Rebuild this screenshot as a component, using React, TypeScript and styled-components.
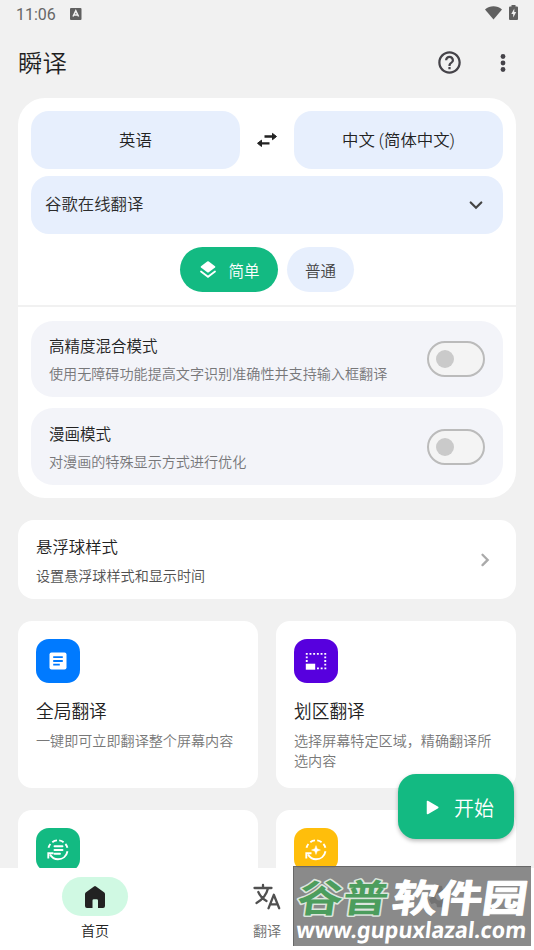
import React from 'react';
import styled, { createGlobalStyle } from 'styled-components';

const GlobalStyle = createGlobalStyle`
  * { box-sizing: border-box; }
  html, body { margin: 0; padding: 0; overflow: hidden; background: #f1f1f1; }
  body { font-family: Roboto, "Noto Sans CJK SC DemiLight", "Noto Sans CJK SC", sans-serif; font-weight: 350; color: #222; }
`;

const Screen = styled.div`
  position: relative;
  width: 534px;
  height: 950px;
  overflow: hidden;
  display: flex;
  flex-direction: column;
  background: #f1f1f1;
`;

const StatusBar = styled.div`
  height: 28px;
  flex: none;
  display: flex;
  align-items: center;
  padding: 0 15px 0 16px;
  color: #666;
  font-size: 16px;
  font-weight: 400;
  svg { display: block; }
`;

const StatusIcons = styled.div`
  margin-left: auto;
  display: flex;
  align-items: center;
  gap: 7px;
  padding: 0 1px 3px 0;
`;

const InputBadge = styled.div`
  margin-left: 14px;
`;

const Header = styled.header`
  height: 70px;
  flex: none;
  display: flex;
  align-items: center;
  padding: 0 18px 1px 18px;
`;

const Title = styled.h1`
  margin: 2px auto 0 0;
  font-size: 24.4px;
  font-weight: 350;
  line-height: 36px;
  color: #1f1f1f;
`;

const HeaderActions = styled.div`
  display: flex;
  gap: 27px;
  align-items: center;
  svg { display: block; }
`;

const Content = styled.main`
  flex: 1;
  min-height: 0;
  overflow: hidden;
  padding: 0 18px;
`;

const Panel = styled.section`
  background: #fff;
  border-radius: 27px;
  height: 400px;
`;

const Languages = styled.div`
  display: grid;
  grid-template-columns: 209px 1fr 209px;
  align-items: center;
  justify-items: center;
  padding: 13px 13px 0;
`;

const LanguageButton = styled.button`
  width: 100%;
  height: 58px;
  border: 0;
  padding: 2px 0 0;
  border-radius: 18px;
  background: #e7effd;
  font: inherit;
  font-size: 16.4px;
  line-height: 24px;
  color: #222;
`;

const EngineSelect = styled.div`
  margin: 7px 13px 0;
  height: 58px;
  border-radius: 18px;
  background: #e7effd;
  display: flex;
  align-items: center;
  justify-content: space-between;
  padding: 0 15px 0 14px;
  font-size: 16.4px;
  line-height: 26px;
  color: #2b2b2b;
  svg { margin-top: -1px; }
`;

const Chips = styled.div`
  display: flex;
  justify-content: center;
  gap: 9px;
  padding: 13px 0 13px;
`;

const Chip = styled.button<{ $active?: boolean; $width: number }>`
  width: ${p => p.$width}px;
  height: 45px;
  border: 0;
  padding: 0;
  border-radius: 23px;
  display: flex;
  align-items: center;
  justify-content: center;
  gap: 10px;
  font: inherit;
  font-size: 15.5px;
  background: ${p => (p.$active ? '#13ba82' : '#e7effd')};
  color: ${p => (p.$active ? '#fff' : '#444')};
`;

const Divider = styled.div`
  height: 2px;
  background: #f1f1f1;
`;

const Options = styled.div`
  display: flex;
  flex-direction: column;
  gap: 11px;
  padding: 14px 13px;
`;

const OptionRow = styled.div`
  height: 76px;
  &:last-child { height: 77px; }
  border-radius: 22px;
  background: #f3f4f9;
  display: flex;
  align-items: center;
  justify-content: space-between;
  padding: 0 18px;
`;

const OptionTitle = styled.div`
  font-size: 15.5px;
  line-height: 24px;
  margin: 2px 0 4px;
  color: #222;
`;

const OptionText = styled.div`
  font-size: 14.1px;
  line-height: 22px;
  color: #777779;
`;

const Toggle = styled.div`
  width: 58px;
  height: 36px;
  border: 2px solid #bbb;
  border-radius: 18px;
  background: #f4f4f4;
  padding: 7px;
  &::before {
    content: "";
    display: block;
    width: 18px;
    height: 18px;
    border-radius: 50%;
    background: #cacaca;
  }
`;

const StyleCard = styled.section`
  margin-top: 22px;
  height: 79px;
  border-radius: 16px;
  background: #fff;
  padding: 0 18px;
  display: flex;
  align-items: center;
  justify-content: space-between;
`;

const StyleTitle = styled.div`
  font-size: 16.4px;
  line-height: 24px;
  color: #222;
  margin: 4px 0 5px;
`;

const StyleText = styled.div`
  font-size: 14.1px;
  line-height: 22px;
  color: #505050;
`;

const Tiles = styled.div`
  margin-top: 22px;
  display: grid;
  grid-template-columns: 240px 240px;
  column-gap: 18px;
  row-gap: 22px;
`;

const Tile = styled.section`
  height: 167px;
  border-radius: 14px;
  background: #fff;
  padding: 18px 18px 0;
`;

const TileIcon = styled.div<{ $color: string }>`
  width: 44px;
  height: 44px;
  border-radius: 13px;
  background: ${p => p.$color};
  display: flex;
  align-items: center;
  justify-content: center;
`;

const TileTitle = styled.div`
  margin-top: 15px;
  font-size: 17.7px;
  line-height: 28px;
  color: #222;
`;

const TileText = styled.div`
  margin: 6px -6px 0 0;
  width: 200px;
  font-size: 14.1px;
  line-height: 19.5px;
  color: #787878;
`;

const StartButton = styled.button`
  position: absolute;
  right: 20px;
  top: 774px;
  width: 116px;
  height: 65px;
  border: 0;
  border-radius: 18px;
  background: #13ba82;
  color: #fff;
  font: inherit;
  font-size: 20px;
  display: flex;
  align-items: center;
  padding: 1px 0 0 28px;
  gap: 15px;
  box-shadow: 0 2px 4px rgba(0, 0, 0, 0.28);
`;

const Nav = styled.nav`
  height: 82px;
  flex: none;
  background: #fff;
  padding: 9px 9px 0;
  display: grid;
  grid-template-columns: repeat(3, 1fr);
`;

const NavItem = styled.div<{ $active?: boolean }>`
  display: flex;
  flex-direction: column;
  align-items: center;
  font-size: 14.1px;
  line-height: 20px;
  color: ${p => (p.$active ? '#222' : '#707070')};
`;

const NavPill = styled.div<{ $active?: boolean }>`
  width: 66px;
  height: 39px;
  margin-bottom: 5px;
  border-radius: 20px;
  display: flex;
  align-items: center;
  justify-content: center;
  background: ${p => (p.$active ? '#d0f9e3' : 'transparent')};
`;

const Watermark = styled.div`
  position: absolute;
  left: 293px;
  top: 866px;
  width: 238px;
  height: 80px;
  background: rgba(125, 125, 125, 0.9);
  border-top: 1px solid #686868;
  border-left: 1px solid #686868;
  svg { display: block; overflow: visible; }
`;

const WifiIcon = () => (
  <svg width="17" height="14" viewBox="0 0 17 14">
    <path d="M0 3.4C5 -.9 12 -.9 17 3.4L8.5 13.6z" fill="#606060" />
  </svg>
);

const BatteryIcon = () => (
  <svg width="9" height="15" viewBox="0 0 9 15">
    <path d="M2.5 0h4v1.5H8q1 0 1 1V14q0 1-1 1H1q-1 0-1-1V2.500q0-1 1-1h1.500z" fill="#606060" />
    <path d="M5.300 3.500 2.300 8.900h1.900v3.700l3-5.500H5.300z" fill="#f1f1f1" />
  </svg>
);

const BadgeIcon = () => (
  <svg width="12" height="12" viewBox="0 0 12 12">
    <rect width="11.500" height="12" rx="1" fill="#606060" />
    <path d="M3 8.500 5.800 2.800 8.600 8.500M4 6.900h3.600" fill="none" stroke="#f1f1f1" strokeWidth="1.500" />
  </svg>
);

const HelpIcon = () => (
  <svg width="27" height="27" viewBox="0 0 24 24" fill="#454349">
    <path d="M11 18h2v-2h-2v2zm1-16C6.480 2 2 6.480 2 12s4.480 10 10 10 10-4.480 10-10S17.520 2 12 2zm0 18c-4.410 0-8-3.590-8-8s3.590-8 8-8 8 3.590 8 8-3.590 8-8 8zm0-14c-2.210 0-4 1.790-4 4h2c0-1.100.9-2 2-2s2 .9 2 2c0 2-3 1.750-3 5h2c0-2.250 3-2.500 3-5 0-2.210-1.790-4-4-4z" />
  </svg>
);

const MoreIcon = () => (
  <svg width="26" height="26" viewBox="0 0 26 26" fill="#454349">
    <circle cx="13" cy="6.500" r="2.400" /><circle cx="13" cy="13" r="2.400" /><circle cx="13" cy="19.500" r="2.400" />
  </svg>
);

const SwapIcon = () => (
  <svg width="22" height="18" viewBox="0 0 22 18" fill="none" stroke="#222" strokeWidth="2.300">
    <path d="M8.500 5.500H17M13.500 12.300H5" />
    <path d="M16.500 2.400 20.500 5.500 16.500 8.700zM5.500 9.200 1.500 12.300 5.500 15.500z" fill="#222" stroke="#222" strokeWidth="1" strokeLinejoin="round" />
  </svg>
);

const ChevronDown = () => (
  <svg width="24" height="24" viewBox="0 0 24 24" fill="none" stroke="#444" strokeWidth="2.200" strokeLinecap="round">
    <path d="m6.700 9.500 5.300 5.300 5.300-5.300" />
  </svg>
);

const ChevronRight = () => (
  <svg width="26" height="26" viewBox="0 0 26 26" fill="none" stroke="#aaa" strokeWidth="2.300" strokeLinecap="round">
    <path d="m10.500 7.700 5.200 5.200-5.200 5.200" />
  </svg>
);

const LayersIcon = () => (
  <svg width="20" height="20" viewBox="0 0 20 20" fill="#fff">
    <path d="M9.200 1.500q.8-.5 1.600 0l6.200 4.700q.9.700 0 1.400l-6.200 4.700q-.8.500-1.600 0L3 7.600q-.9-.7 0-1.400z" />
    <path d="m3 11.500 7 5.300 7-5.300" fill="none" stroke="#fff" strokeWidth="1.800" strokeLinecap="round" />
  </svg>
);

const ArticleIcon = () => (
  <svg width="18" height="18" viewBox="0 0 18 18">
    <rect x=".5" y=".5" width="17" height="17" rx="2" fill="#fff" />
    <path d="M4.200 5.200h9.600M4.200 9h9.600M4.200 12.700h6.600" stroke="#007aff" strokeWidth="1.800" />
  </svg>
);

const RegionIcon = () => (
  <svg width="22" height="18" viewBox="0 0 22 18">
    <path d="M.8 1.800h20.500M.8 5.300h2M.8 9h2M19.300 5.300h2M19.300 9h2M19.300 12.700h2M12 16.400h9.300" fill="none" stroke="#fff" strokeWidth="1.800" strokeDasharray="1.900 1.800" />
    <path d="M.8 11.700h9.400v6H.8z" fill="#fff" />
  </svg>
);

const CycleIcon = ({ children }: { children: React.ReactNode }) => (
  <svg width="24" height="24" viewBox="0 0 24 24" fill="none" stroke="#fff" strokeWidth="1.900">
    <path d="M2.500 9.800Q3 7.700 4.400 6M6.300 4.200Q8.300 2.600 11 2.400M13.200 2.400Q15.700 2.700 17.600 4.200M19.400 6Q21 7.700 21.400 9.800M21.500 13.200C20.500 18 16.800 21.300 12 21.300Q6.800 21.200 4 16.500" />
    <path d="M2.300 20.400v-5.200h5.200" />
    {children}
  </svg>
);

const PlayIcon = () => (
  <svg width="13" height="15" viewBox="0 0 13 15">
    <path d="M1.500 1.500v12L11.800 7.500z" fill="#fff" stroke="#fff" strokeWidth="1.500" strokeLinejoin="round" />
  </svg>
);

const HomeIcon = () => (
  <svg width="22" height="24" viewBox="0 0 22 24">
    <path d="M10 1.500q1-.8 2 0l8 5.800q1 .7 1 2V21q0 2-2 2h-5v-7.500q0-1.300-1.300-1.300H9.800Q8.500 14.200 8.500 15.500V23H3q-2 0-2-2V9.300q0-1.300 1-2z" fill="#222" />
  </svg>
);

const TranslateIcon = () => (
  <svg width="30" height="28" viewBox="0 0 30 28" fill="none" stroke="#505050" strokeWidth="2.300" strokeLinecap="round" strokeLinejoin="round">
    <path d="M2.500 5h17M11 2v3M16 5.300C14.500 12 9 17.500 4.500 20M6.300 9C8 13 11 16 14.500 18" />
    <path d="m16.500 25.300 5.300-13.500L27.200 25.300M18.300 21.300h7.200" />
  </svg>
);

const GearIcon = () => (
  <svg width="27" height="27" viewBox="0 0 24 24" fill="#111">
    <path d="M19.140 12.940c.04-.3.060-.61.060-.94 0-.32-.02-.64-.07-.94l2.030-1.580a.49.49 0 0 0 .12-.61l-1.920-3.320a.488.488 0 0 0-.59-.22l-2.390.96c-.5-.38-1.030-.7-1.620-.94l-.36-2.540a.484.484 0 0 0-.48-.41h-3.840c-.24 0-.43.17-.47.41l-.36 2.540c-.59.24-1.130.57-1.620.94l-2.390-.96c-.22-.08-.47 0-.59.22L2.740 8.870c-.12.21-.08.47.12.61l2.030 1.580c-.05.3-.09.63-.09.94s.02.64.07.94l-2.030 1.580a.49.49 0 0 0-.12.61l1.920 3.320c.12.22.37.29.59.22l2.390-.96c.5.38 1.030.7 1.620.94l.36 2.540c.05.24.24.41.48.41h3.840c.24 0 .44-.17.47-.41l.36-2.540c.59-.24 1.130-.56 1.620-.94l2.390.96c.22.08.47 0 .59-.22l1.920-3.320c.12-.22.070-.47-.12-.61l-2.010-1.580zM12 15.600c-1.980 0-3.600-1.620-3.600-3.600s1.620-3.600 3.600-3.600 3.600 1.620 3.600 3.600-1.620 3.600-3.600 3.600z" />
  </svg>
);

export default function App() {
  return (
    <>
      <GlobalStyle />
      <Screen>
        <StatusBar>
          11:06
          <InputBadge><BadgeIcon /></InputBadge>
          <StatusIcons><WifiIcon /><BatteryIcon /></StatusIcons>
        </StatusBar>
        <Header>
          <Title>瞬译</Title>
          <HeaderActions><HelpIcon /><MoreIcon /></HeaderActions>
        </Header>
        <Content>
          <Panel>
            <Languages>
              <LanguageButton>英语</LanguageButton>
              <SwapIcon />
              <LanguageButton>中文 (简体中文)</LanguageButton>
            </Languages>
            <EngineSelect>谷歌在线翻译<ChevronDown /></EngineSelect>
            <Chips>
              <Chip $active $width={98}><LayersIcon />简单</Chip>
              <Chip $width={67}>普通</Chip>
            </Chips>
            <Divider />
            <Options>
              <OptionRow>
                <div>
                  <OptionTitle>高精度混合模式</OptionTitle>
                  <OptionText>使用无障碍功能提高文字识别准确性并支持输入框翻译</OptionText>
                </div>
                <Toggle />
              </OptionRow>
              <OptionRow>
                <div>
                  <OptionTitle>漫画模式</OptionTitle>
                  <OptionText>对漫画的特殊显示方式进行优化</OptionText>
                </div>
                <Toggle />
              </OptionRow>
            </Options>
          </Panel>
          <StyleCard>
            <div>
              <StyleTitle>悬浮球样式</StyleTitle>
              <StyleText>设置悬浮球样式和显示时间</StyleText>
            </div>
            <ChevronRight />
          </StyleCard>
          <Tiles>
            <Tile>
              <TileIcon $color="#007aff"><ArticleIcon /></TileIcon>
              <TileTitle>全局翻译</TileTitle>
              <TileText>一键即可立即翻译整个屏幕内容</TileText>
            </Tile>
            <Tile>
              <TileIcon $color="#5700de"><RegionIcon /></TileIcon>
              <TileTitle>划区翻译</TileTitle>
              <TileText>选择屏幕特定区域，精确翻译所选内容</TileText>
            </Tile>
            <Tile>
              <TileIcon $color="#13ba82">
                <CycleIcon><path d="M8.500 8.200h8M8.500 12h8M8.500 15.800h5.500" strokeLinecap="round" /></CycleIcon>
              </TileIcon>
            </Tile>
            <Tile>
              <TileIcon $color="#ffbe0b">
                <CycleIcon><path d="m12 7.500 1.200 3.300L16.500 12l-3.300 1.200L12 16.500l-1.200-3.300L7.500 12l3.300-1.200z" fill="#fff" strokeWidth=".4" /></CycleIcon>
              </TileIcon>
            </Tile>
          </Tiles>
        </Content>
        <Nav>
          <NavItem $active><NavPill $active><HomeIcon /></NavPill>首页</NavItem>
          <NavItem><NavPill><TranslateIcon /></NavPill>翻译</NavItem>
          <NavItem><NavPill><GearIcon /></NavPill></NavItem>
        </Nav>
        <StartButton><PlayIcon />开始</StartButton>
        <Watermark>
          <svg width="237" height="79" viewBox="0 0 237 79">
            <g fontFamily="'Noto Sans CJK SC'" fontWeight="700" fontSize="38" transform="translate(8 0) skewX(-8)" strokeLinejoin="round">
              <text x="0" y="45" textLength="91" lengthAdjust="spacingAndGlyphs" fill="#4c9d5d" stroke="#dce5dd" strokeWidth="3" paintOrder="stroke">谷普</text>
              <text x="95" y="45" textLength="135" lengthAdjust="spacingAndGlyphs" fill="#fff" stroke="#fff" strokeWidth="1">软件园</text>
            </g>
            <text x="9" y="71" textLength="230" lengthAdjust="spacingAndGlyphs" transform="skewX(-6)" fontFamily="'Noto Sans'" fontWeight="700" fontSize="22.500" fill="#fff">www.gupuxlazal.com</text>
          </svg>
        </Watermark>
      </Screen>
    </>
  );
}
